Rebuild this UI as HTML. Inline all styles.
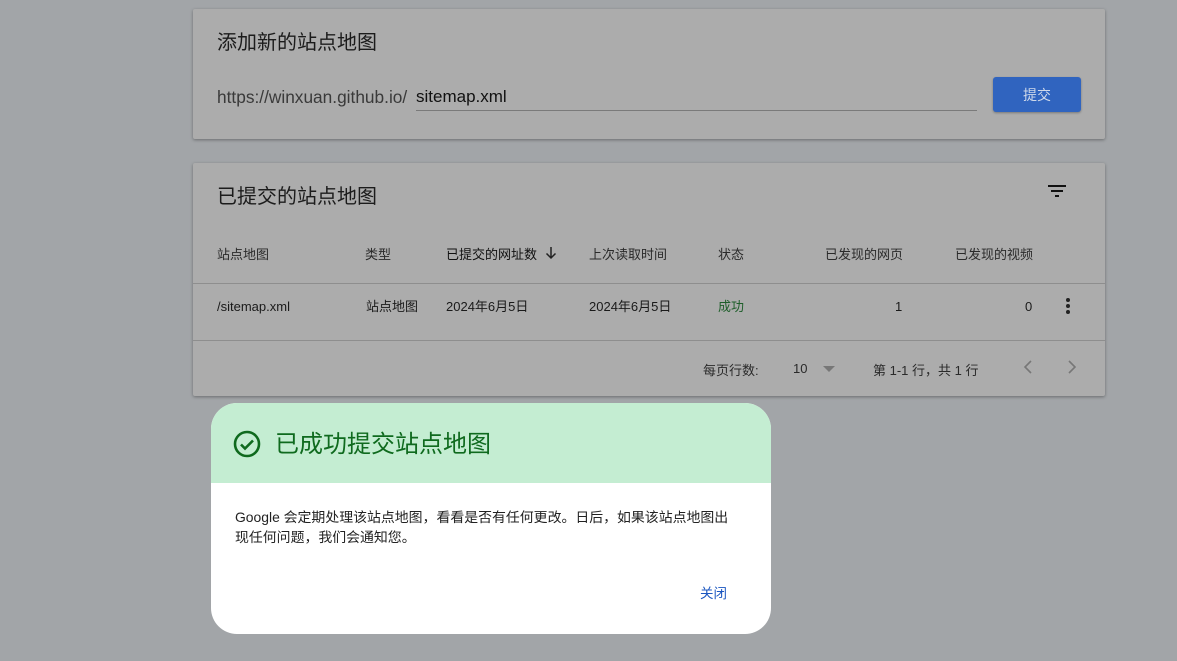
<!DOCTYPE html>
<html><head><meta charset="utf-8"><style>
*{margin:0;padding:0;box-sizing:border-box}
body{width:1177px;height:661px;background:#a2a5a8;position:relative;overflow:hidden;font-family:"Liberation Sans","Noto Sans CJK SC",sans-serif;color:#1a1a1a}
.card{position:absolute;left:193px;width:912px;background:#acacac;box-shadow:0 1px 3px rgba(0,0,0,.35);border-radius:2px}
.a{position:absolute;white-space:nowrap}
.h{font-size:20px;color:#1c1c1c}
.th{font-size:13px;color:#2a2a2a;top:244px}
.td{font-size:13px;color:#1a1a1a;top:296px}
</style></head><body>
<div class="card" style="top:9px;height:130px"></div>
<div class="a h" style="left:217px;top:26px">添加新的站点地图</div>
<div class="a" style="left:217px;top:87px;font-size:17.3px;color:#3a3a3a">https://winxuan.github.io/</div>
<div class="a" style="left:416px;top:87px;font-size:17px;color:#111">sitemap.xml</div>
<div class="a" style="left:416px;top:110px;width:561px;height:1px;background:#7a7a7a"></div>
<div class="a" style="left:993px;top:77px;width:88px;height:35px;background:#3064bf;border-radius:3px;box-shadow:0 1px 2px rgba(0,0,0,.3);color:#cfd9ea;font-size:14px;text-align:center;line-height:36px">提交</div>

<div class="card" style="top:163px;height:233px"></div>
<div class="a h" style="left:217px;top:180px">已提交的站点地图</div>
<svg class="a" style="left:1045px;top:179px" width="24" height="24" viewBox="0 0 24 24"><path d="M3 6h18v2H3zM6 11h12v2H6zM10 16h4v2h-4z" fill="#111"/></svg>
<div class="a th" style="left:217px">站点地图</div>
<div class="a th" style="left:365px">类型</div>
<div class="a th" style="left:446px;color:#111">已提交的网址数</div>
<svg class="a" style="left:543px;top:245px" width="16" height="16" viewBox="0 0 16 16"><path d="M8 2v11M3.5 8.5L8 13l4.5-4.5" stroke="#222" stroke-width="1.5" fill="none"/></svg>
<div class="a th" style="left:589px">上次读取时间</div>
<div class="a th" style="left:718px">状态</div>
<div class="a th" style="left:825px">已发现的网页</div>
<div class="a th" style="left:955px">已发现的视频</div>
<div class="a" style="left:193px;top:283px;width:912px;height:1px;background:#8e8e8e"></div>
<div class="a td" style="left:217px;top:299px">/sitemap.xml</div>
<div class="a td" style="left:366px">站点地图</div>
<div class="a td" style="left:446px">2024年6月5日</div>
<div class="a td" style="left:589px">2024年6月5日</div>
<div class="a td" style="left:718px;color:#1e5e2a">成功</div>
<div class="a td" style="left:895px;top:299px">1</div>
<div class="a td" style="left:1025px;top:299px">0</div>
<svg class="a" style="left:1060px;top:296px" width="16" height="20" viewBox="0 0 16 20"><circle cx="8" cy="4" r="2" fill="#222"/><circle cx="8" cy="10" r="2" fill="#222"/><circle cx="8" cy="16" r="2" fill="#222"/></svg>
<div class="a" style="left:193px;top:340px;width:912px;height:1px;background:#8e8e8e"></div>
<div class="a" style="left:703px;top:360px;font-size:13px;color:#2a2a2a">每页行数:</div>
<div class="a" style="left:793px;top:361px;font-size:13px;color:#2a2a2a">10</div>
<svg class="a" style="left:823px;top:366px" width="12" height="6"><path d="M0 0h12L6 6z" fill="#777"/></svg>
<div class="a" style="left:873px;top:360px;font-size:13px;color:#2a2a2a">第 1-1 行，共 1 行</div>
<svg class="a" style="left:1022px;top:360px" width="12" height="14"><path d="M9 1L3 7l6 6" stroke="#777" stroke-width="1.6" fill="none"/></svg>
<svg class="a" style="left:1066px;top:360px" width="12" height="14"><path d="M3 1l6 6-6 6" stroke="#777" stroke-width="1.6" fill="none"/></svg>

<div class="a" style="left:211px;top:403px;width:560px;height:231px;background:#fff;border-radius:26px;overflow:hidden">
<div style="height:80px;background:#c4edd2"></div>
</div>
<svg class="a" style="left:232px;top:429px" width="30" height="30" viewBox="0 0 30 30"><circle cx="15" cy="15" r="12" stroke="#0f6a1e" stroke-width="2.6" fill="none"/><path d="M9 15.5l4 4 8-8" stroke="#0f6a1e" stroke-width="2.6" fill="none"/></svg>
<div class="a" style="left:275px;top:424px;font-size:24px;color:#0f6a1e">已成功提交站点地图</div>
<div class="a" style="left:235px;top:507px;font-size:13.9px;color:#222;line-height:20px;white-space:normal;width:500px">Google 会定期处理该站点地图，看看是否有任何更改。日后，如果该站点地图出现任何问题，我们会通知您。</div>
<div class="a" style="left:700px;top:582px;font-size:13.5px;color:#1a56c0">关闭</div>
</body></html>
